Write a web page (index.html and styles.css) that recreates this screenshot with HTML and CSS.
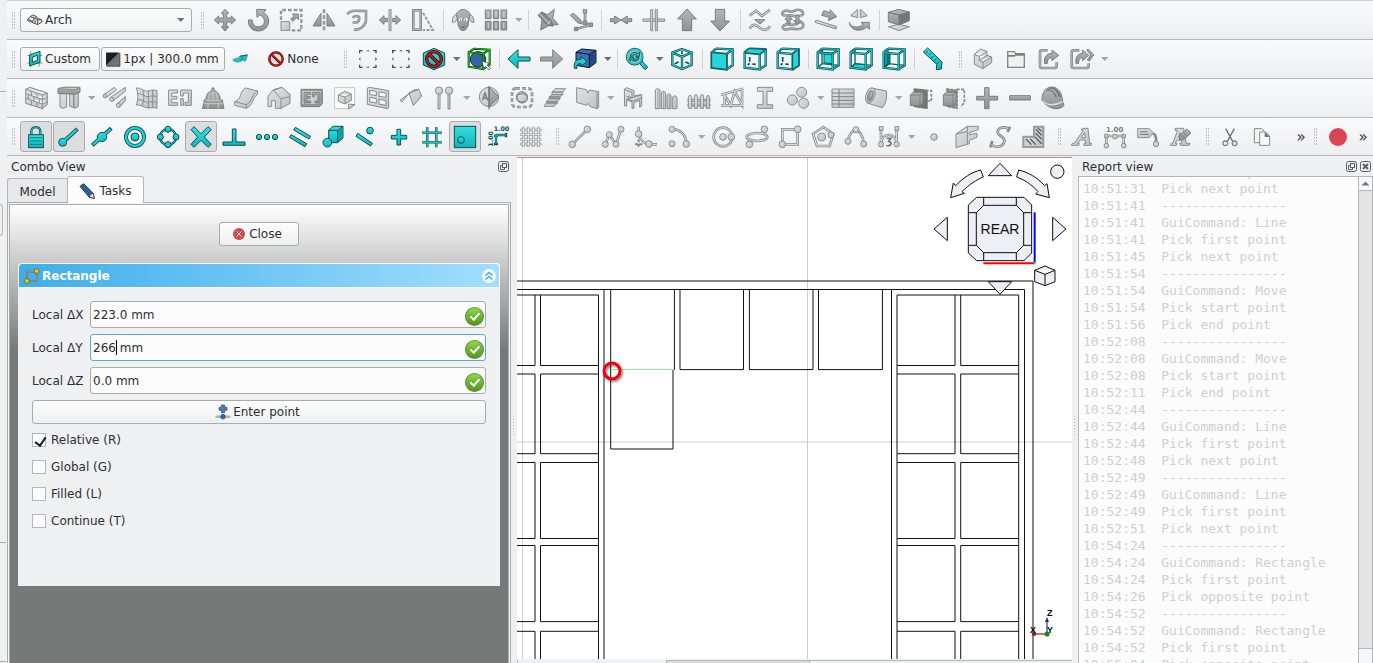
FILE: index.html
```html
<!DOCTYPE html>
<html lang="en">
<head>
<meta charset="utf-8">
<title>Arch workbench</title>
<link rel="stylesheet" href="styles.css">
</head>
<body>
<svg class="defs" aria-hidden="true">
  <defs>
    <linearGradient id="gl" x1="0" y1="0" x2="1" y2="1"><stop offset="0" stop-color="#e2e3e4"/><stop offset="1" stop-color="#bfc1c1"/></linearGradient>
    <linearGradient id="gd" x1="0" y1="0" x2="0" y2="1"><stop offset="0" stop-color="#b6b8b8"/><stop offset="1" stop-color="#909292"/></linearGradient>
    <linearGradient id="tl" x1="0" y1="0" x2="0" y2="1"><stop offset="0" stop-color="#34e0e2"/><stop offset="1" stop-color="#13b4b8"/></linearGradient>
    <linearGradient id="ok" x1="0" y1="0" x2="0" y2="1"><stop offset="0" stop-color="#8be03a"/><stop offset="1" stop-color="#4e9a06"/></linearGradient>
    <symbol id="cube" viewBox="0 0 72 72">
      <path class="to" d="M5 17L50 21V67L5 62ZM18 5L68 7V55L50 67M5 17L18 5M50 21L68 7"/>
      <path class="ti" d="M5 17L50 21V67L5 62ZM18 5L68 7V55L50 67M5 17L18 5M50 21L68 7"/>
    </symbol>
    <symbol id="cubeback" viewBox="0 0 72 72">
      <path class="thin" d="M18 5V50L5 62M18 50L68 55"/>
    </symbol>
    <symbol id="cubehint" viewBox="0 0 72 72"><path class="tn" d="M20 30V44M14 54L20 49M28 51L38 52"/></symbol>
    <symbol id="drop" viewBox="0 0 11 8"><path d="M2 2H9.500L5.750 6Z"/></symbol>
    <symbol id="tick" viewBox="0 0 18 18"><circle cx="9" cy="9" r="8.500" fill="url(#ok)" stroke="#6a7f6a"/><path d="M3.500 9.500L6 7.500 8 10 13 4.500 15 6.500 8.500 14Z" fill="#eee" stroke="#4d7a28" stroke-width=".6"/></symbol>
    <symbol id="float" viewBox="0 0 11 11"><rect x=".5" y=".5" width="10" height="10" rx="2"/><rect x="4.500" y="2.500" width="4" height="4"/><path d="M4 4.500H2.500V8.500H6.500V7"/></symbol>
  </defs>
</svg>

<div class="window">
  <aside class="edge"><i class="rule"></i><i class="tabend"></i><i class="rule"></i><i class="rule"></i></aside>
  <div class="content">
    <header class="toolbars">

      <div class="row first">
        <i class="handle"></i>
        <div class="bench">
          <select aria-label="Workbench"><option>Arch</option></select>
          <svg class="benchicon" viewBox="80 37 48 48"><path d="M82 59L96 46 108 50 112 57 124 60 125 67 112 75 82 63ZM82 59L96 64 108 50M96 64V69M98 54L112 60 124 60M112 60V75M90 51L103 56M104 62L104 71"/></svg>
          <svg class="drop dark" viewBox="0 0 11 8"><use href="#drop"/></svg>
        </div>
        <div class="group">
          <i class="handle"></i>
          <button aria-label="Move"><svg class="i" viewBox="639 24 72 72"><path class="d" d="M675 28L686 40H680V54H694V48L707 60 694 72V66H680V80H686L675 93 664 80H670V66H656V72L643 60 656 48V54H670V40H664Z"/></svg></button>
          <button aria-label="Rotate"><svg class="i" viewBox="738 24 72 72"><path class="d" d="M745 60C745 83 757 93 775 93 793 93 806 80 806 63 806 50 800 43 791 38L798 29 770 28 771 52 779 45C788 48 793 54 793 63 793 74 786 80 775 80 763 80 757 73 757 60Z"/></svg></button>
          <button aria-label="Scale"><svg class="i" viewBox="837 24 72 72"><path d="M843 60V30H904V91H874" fill="none" stroke="#949696" stroke-width="7" stroke-dasharray="11 6"/><rect class="l" x="843" y="65" width="26" height="26" stroke-width="5"/><path class="d" d="M872 57L883 48 877 42H895V59L889 53 879 64Z"/></svg></button>
          <button aria-label="Mirror"><svg class="i" viewBox="936 24 72 72"><path class="d" d="M939 78L963 40V78ZM1005 78L981 40V78Z"/><path class="ls" d="M972 28V92" stroke-width="8" stroke-dasharray="12 5"/></svg></button>
          <button aria-label="Offset"><svg class="i" viewBox="15 24 72 72"><path class="o1" d="M22 43C32 28 48 33 78 33V56C78 78 58 92 42 88"/><path class="o2" d="M22 43C32 28 48 33 78 33V56C78 78 58 92 42 88"/><path class="o1" d="M38 54C44 44 59 48 58 56 57 67 48 70 38 66"/><path class="o2" d="M38 54C44 44 59 48 58 56 57 67 48 70 38 66"/></svg></button>
          <button aria-label="Trim"><svg class="i" viewBox="114 24 72 72"><rect class="l" x="147" y="29" width="6" height="63"/><path class="d" d="M118 60L132 47V55H142V65H132V73ZM182 60L168 47V55H158V65H168V73Z"/></svg></button>
          <button aria-label="Stretch"><svg class="i" viewBox="213 24 72 72"><rect x="220" y="31" width="22" height="58" fill="none" stroke="#858787" stroke-width="8"/><rect x="220" y="31" width="22" height="58" fill="none" stroke="#c4c6c6" stroke-width="2"/><path d="M249 38L279 90H249" fill="none" stroke="#9b9d9d" stroke-width="6" stroke-dasharray="10 4"/></svg></button>
          <i class="sep"></i>
          <button aria-label="Clone"><svg class="i" viewBox="333 24 72 72"><path class="l" d="M352 42C340 44 336 56 337 67 345 68 351 62 353 52ZM386 42C398 44 402 56 402 67 394 68 388 62 386 52Z"/><path class="d" d="M352 54C346 46 350 35 358 33 362 27 376 27 381 33 389 35 393 46 387 54L384 78 377 89 369 92 361 89 355 78Z"/><circle cx="361" cy="59" r="5" fill="#fff"/><circle cx="378" cy="59" r="5" fill="#fff"/><circle cx="362" cy="60" r="2" fill="#555"/><circle cx="377" cy="60" r="2" fill="#555"/><path d="M363 80L369 83 375 80" fill="none" stroke="#666" stroke-width="3"/></svg></button>
          <button aria-label="Array"><svg class="i" viewBox="432 24 72 72"><path class="d" d="M436 30H453V56H436ZM460 30H476V56H460ZM483 30H500V56H483ZM436 64H453V90H436ZM460 64H476V90H460ZM483 64H500V90H483Z"/><path d="M445 34V52M468 34V52M491 34V52M445 68V86M468 68V86M491 68V86" stroke="#c5c7c7" stroke-width="4"/></svg></button>
          <svg class="drop" viewBox="0 0 11 8"><use href="#drop"/></svg>
          <i class="sep"></i>
          <button aria-label="Edit"><svg class="i" viewBox="588 24 72 72"><path class="d" d="M604 36L622 44 643 28 638 54 655 74 628 76 602 90 606 60Z"/><path d="M594 46L606 36 634 62 638 79 621 74Z" fill="#8b8d8d" stroke="#6a6c6c" stroke-width="3"/><path d="M600 42L627 70M622 73L633 63" stroke="#d4d6d6" stroke-width="3"/></svg></button>
          <button aria-label="Edit parts"><svg class="i" viewBox="687 24 72 72"><path class="o1" d="M735 35V68L751 75 708 87"/><path class="o2" d="M735 35V68L751 75 708 87"/><path class="d" d="M730 29H740V39H730ZM748 69H758V80H748ZM703 82H713V92H703ZM729 63H740V73H729ZM691 45L701 40 722 60 725 72 713 68Z"/></svg></button>
          <i class="sep"></i>
          <button aria-label="Join"><svg class="i" viewBox="807 24 72 72"><path class="d" d="M811 56H824V48L843 60 824 72V65H811ZM875 56H862V48L843 60 862 72V65H875Z"/></svg></button>
          <button aria-label="Split"><svg class="i" viewBox="906 24 72 72"><path class="l" d="M909 57H974V64H909Z"/><path class="l" d="M932 29H938V92H932ZM946 29H952V92H946Z"/></svg></button>
          <button aria-label="Upgrade"><svg class="i" viewBox="-15 24 72 72"><path class="d" d="M21 27L49 57H35V92H7V57H-7Z"/></svg></button>
          <button aria-label="Downgrade"><svg class="i" viewBox="84 24 72 72"><path class="d" d="M120 93L149 63H134V28H106V63H92Z"/></svg></button>
          <i class="sep"></i>
          <button aria-label="Wire to B-spline"><svg class="i" viewBox="204 24 72 72"><path class="o1" d="M209 47L228 32 246 48 270 29M209 86C220 68 229 74 240 84 252 94 263 90 270 79"/><path class="o3" d="M209 47L228 32 246 48 270 29M209 86C220 68 229 74 240 84 252 94 263 90 270 79"/><path class="d" d="M224 59H255L240 72Z"/></svg></button>
          <button aria-label="Draft to sketch"><svg class="i" viewBox="303 24 72 72"><path class="o1" d="M312 34C326 26 331 42 344 32 356 25 374 34 368 44 358 54 326 44 312 46 304 44 306 36 312 34ZM312 76C326 66 340 84 356 68 368 62 374 76 366 84 352 94 336 80 322 88 310 92 304 82 312 76"/><path class="o2" d="M312 34C326 26 331 42 344 32 356 25 374 34 368 44 358 54 326 44 312 46 304 44 306 36 312 34ZM312 76C326 66 340 84 356 68 368 62 374 76 366 84 352 94 336 80 322 88 310 92 304 82 312 76"/><path class="d" d="M326 46L337 58H330V72H321V58H315ZM352 74L341 62H348V46H357V62H363Z"/></svg></button>
          <button aria-label="Slope"><svg class="i" viewBox="402 24 72 72"><path class="l" d="M408 60L470 80 468 87 405 67Z"/><path class="d" d="M431 32L450 38 451 29 470 50 445 62 448 52 425 46Z"/></svg></button>
          <button aria-label="Flip dimension"><svg class="i" viewBox="501 24 72 72"><path class="l" d="M533 28V53L512 47ZM541 28V53L562 47Z"/><path class="d" d="M508 68C514 83 536 86 550 73L543 67H568V88L560 81C542 98 511 92 508 68Z"/></svg></button>
          <i class="sep"></i>
          <button aria-label="Working plane side"><svg class="i" viewBox="621 24 72 72"><path class="l" d="M625 80L656 73 688 80 657 92Z"/><path class="d" d="M625 37L655 28 688 36V62L657 75 625 65Z"/><path d="M625 37L657 45 688 36M657 45V75" fill="none" stroke="#6e7070" stroke-width="3"/><path d="M657 45L688 36V62L657 74Z" fill="#777"/></svg></button>
        </div>
      </div>

      <div class="row">
        <div class="group">
          <i class="handle"></i>
          <button class="boxed plane"><svg viewBox="81 153 48 48"><path d="M82 166H127M82 189H127M92 154V200M117 154V200" stroke="#555" stroke-width="2"/><path class="t" d="M89 165L120 154V187L89 198ZM97 171V187L112 181V166Z" fill-rule="evenodd"/></svg>Custom</button>
          <button class="boxed style"><svg viewBox="318 155 44 44"><path d="M321 159H358L321 196Z" fill="#1b1d1e"/><path d="M359 161V197H323Z" fill="#6f757b" stroke="#31363b" stroke-width="2"/></svg>1px | 300.0 mm</button>
          <button class="brush" aria-label="Apply style"><svg class="i" viewBox="684 141 72 72"><path d="M698 180C706 172 714 178 720 168L743 164 737 184 728 181C716 189 706 188 698 180Z" fill="#1fbfc3" stroke="#3a9a9e" stroke-width="2"/><path d="M719 169L741 165M722 180L730 174" stroke="#08666a" stroke-width="3"/></svg></button>
          <button class="none"><svg viewBox="807 154 48 48"><circle cx="831" cy="178" r="20" fill="#ddd" stroke="#3a0a0a" stroke-width="7"/><path d="M817 164L845 192" stroke="#3a0a0a" stroke-width="7"/><circle cx="831" cy="178" r="20" fill="none" stroke="#cc1a1a" stroke-width="4"/><path d="M817 164L845 192" stroke="#cc1a1a" stroke-width="4"/></svg>None</button>
        </div>
        <div class="group">
          <i class="handle"></i>
          <button aria-label="Box selection"><svg class="i" viewBox="48 141 72 72"><path class="mark" d="M59 160V152H68M99 152H108V160M108 194V202H99M68 202H59V194"/><path class="pt" d="M78 154L84 150 90 154ZM78 200L84 204 90 200ZM61 171L57 177 61 183ZM106 171L111 177 106 183Z"/></svg></button>
          <button aria-label="Box element selection"><svg class="i" viewBox="147 141 72 72"><path class="mark" d="M158 160V152H167M198 152H207V160M207 194V202H198M167 202H158V194"/><path class="pt" d="M177 154L183 150 189 154ZM177 200L183 204 189 200ZM160 171L156 177 160 183ZM205 171L210 177 205 183Z"/></svg></button>
          <button aria-label="Draw style"><svg class="i" viewBox="246 141 72 72"><path class="t" d="M282 145L314 159V195L282 209 250 195V159Z"/><circle cx="282" cy="177" r="22" fill="none" stroke="#2c0505" stroke-width="10"/><path d="M267 162L297 192" stroke="#2c0505" stroke-width="10"/><circle cx="282" cy="177" r="22" fill="none" stroke="#d01818" stroke-width="5"/><path d="M266 161L298 193" stroke="#d01818" stroke-width="5"/></svg></button>
          <svg class="drop dark" viewBox="0 0 11 8"><use href="#drop"/></svg>
          <button aria-label="Bounding box"><svg class="i" viewBox="381 141 72 72"><circle cx="414" cy="178" r="23" fill="#3465a4" stroke="#12294a" stroke-width="3"/><path d="M386 157L430 161V207L386 200ZM386 157L402 146 449 149V194L430 207M430 161L449 149" fill="none" stroke="#063c06" stroke-width="6"/><path d="M386 157L430 161V207L386 200ZM386 157L402 146 449 149V194L430 207M430 161L449 149" fill="none" stroke="#12c412" stroke-width="3"/><path d="M426 183L431 205 437 199 447 210 452 205 441 195 448 191Z" fill="#fff" stroke="#333" stroke-width="2"/></svg></button>
          <i class="sep"></i>
          <button aria-label="Back"><svg class="i" viewBox="501 141 72 72"><path class="t" d="M504 177L534 149V171H570V183H534V205Z"/></svg></button>
          <button aria-label="Forward"><svg class="i" viewBox="600 141 72 72"><path class="d" d="M668 177L638 149V171H602V183H638V205Z"/></svg></button>
          <button aria-label="Linked object"><svg class="i" viewBox="699 141 72 72"><path d="M708 157L725 147 768 151V188L748 203 708 196Z" fill="#3f70b0" stroke="#0b1521" stroke-width="3"/><path d="M750 164L767 153V187L750 200Z" fill="#204a87"/><path d="M708 157L748 163 768 151M748 163V203" fill="none" stroke="#0b1521" stroke-width="3"/><path class="t" d="M703 205C700 186 710 177 723 178V170L741 184 723 199V191C714 190 709 194 711 205Z"/></svg></button>
          <svg class="drop dark" viewBox="0 0 11 8"><use href="#drop"/></svg>
          <i class="sep"></i>
          <button aria-label="Fit all"><svg class="i" viewBox="855 141 72 72"><path class="t" d="M896 187L903 180 923 202 915 209Z"/><circle cx="884" cy="170" r="22" fill="#fff" stroke="#0b5054" stroke-width="9"/><circle cx="884" cy="170" r="22" fill="#9fb9bc" stroke="#16cfd1" stroke-width="5"/><path class="t" d="M871 168C873 157 887 154 894 161L898 157V169H887L890 165C885 161 879 163 878 168ZM897 173C895 184 881 186 874 179L870 183V171H881L878 175C884 179 889 178 890 173Z" stroke-width="2"/></svg></button>
          <svg class="drop dark" viewBox="0 0 11 8"><use href="#drop"/></svg>
          <button aria-label="Isometric"><svg class="i" viewBox="0 0 72 72"><path class="to" d="M36 6L65 17V54L36 66 7 54V17ZM7 17L36 29 65 17M36 29V66"/><path class="ti" d="M36 6L65 17V54L36 66 7 54V17ZM7 17L36 29 65 17M36 29V66"/><path class="tn" d="M36 12V22M14 50L26 45M58 50L46 45"/></svg></button>
          <i class="sep"></i>
          <button aria-label="Front"><svg class="i" viewBox="0 0 72 72"><use href="#cube"/><path class="face" d="M5 17L50 21V67L5 62Z"/></svg></button>
          <button aria-label="Top"><svg class="i" viewBox="0 0 72 72"><use href="#cubehint"/><use href="#cube"/><path class="face" d="M5 17L18 5 68 7 50 21Z"/></svg></button>
          <button aria-label="Right"><svg class="i" viewBox="0 0 72 72"><use href="#cubehint"/><use href="#cube"/><path class="face" d="M50 21L68 7V55L50 67Z"/></svg></button>
          <i class="sep"></i>
          <button aria-label="Rear"><svg class="i" viewBox="0 0 72 72"><path class="face" d="M24 20L50 22V50L24 48Z"/><path class="face" d="M20 8L66 9 52 18 20 16Z" fill-opacity="0"/><use href="#cubeback"/><use href="#cube"/></svg></button>
          <button aria-label="Bottom"><svg class="i" viewBox="0 0 72 72"><path class="face" d="M5 62L18 50 50 53V67Z"/><use href="#cubeback"/><use href="#cube"/></svg></button>
          <button aria-label="Left"><svg class="i" viewBox="0 0 72 72"><path class="face deep" d="M7 18H24V50L7 62Z"/><use href="#cubeback"/><use href="#cube"/></svg></button>
          <i class="sep"></i>
          <button aria-label="Measure"><svg class="i" viewBox="726 141 72 72"><path class="t" d="M730 156L743 144 786 186 784 207 769 209 770 193Z"/><path d="M744 153L737 160M753 160L747 165M760 169L751 176M769 177L763 182M778 184L770 192" stroke="#0b5054" stroke-width="3"/></svg></button>
        </div>
        <div class="group">
          <i class="handle"></i>
          <button aria-label="Part"><svg class="i" viewBox="873 141 72 72"><path class="l" d="M883 163L902 147 921 154V166L935 171V188L909 206 883 193ZM883 163L898 169 921 154M898 169V181L921 166M898 181L909 186 935 171M909 186V206"/></svg></button>
          <button aria-label="Group"><svg class="i" viewBox="972 141 72 72"><path d="M983 202V155H1003L1007 161H1033V202Z" fill="#f0f1f1" stroke="#858787" stroke-width="4"/><path d="M983 165H1004L1008 160H1033V167H1008L1004 170H983Z" fill="#7c7e7e"/></svg></button>
          <button aria-label="Make link"><svg class="i" viewBox="42 141 72 72"><path class="o1" d="M74 151H57Q51 151 51 157V198Q51 204 57 204H94Q101 204 101 197V186"/><path class="o2" d="M74 151H57Q51 151 51 157V198Q51 204 57 204H94Q101 204 101 197V186"/><path class="d" d="M65 191C62 170 71 161 87 160V150L107 166 87 182V173C78 173 73 178 73 190Z"/></svg></button>
          <button aria-label="Link actions"><svg class="i" viewBox="141 141 72 72"><path class="o1" d="M169 151H152Q146 151 146 157V198Q146 204 152 204H190Q197 204 197 197V190"/><path class="o2" d="M169 151H152Q146 151 146 157V198Q146 204 152 204H190Q197 204 197 197V190"/><path class="d" d="M159 191C156 170 165 161 179 160V150L197 166 179 182V173C171 173 167 178 167 190Z"/><path class="d" d="M191 150L197 148 212 165 199 183 193 180 203 165Z"/></svg></button>
          <svg class="drop" viewBox="0 0 11 8"><use href="#drop"/></svg>
        </div>
      </div>

      <div class="row">
        <div class="group">
          <i class="handle"></i>
          <button aria-label="Wall"><svg class="i" viewBox="72 258 72 72"><path class="l" d="M77 268L90 262 142 279V314L127 326 77 310ZM77 268L127 284 142 279M127 284V326M77 281L127 298 142 292M77 295L127 312 142 304M94 273V287M111 279V293M85 284V297M102 290V304M118 295V308M94 301V315M111 306V320"/></svg></button>
          <button aria-label="Structure"><svg class="i" viewBox="171 258 72 72"><path class="l" d="M180 281H200V321L188 325 180 321ZM209 280H221V323L209 319ZM221 280H235V320L223 325Z"/><path class="d" d="M174 266L192 262H240V277L225 283 174 280Z"/><path class="l" d="M174 266L192 262H240L226 269Z"/></svg></button>
          <svg class="drop" viewBox="0 0 11 8"><use href="#drop"/></svg>
          <button aria-label="Rebar"><svg class="i" viewBox="306 258 72 72"><path class="l" d="M310 285L343 262 350 269 318 293Q310 292 310 285ZM330 293L376 262V274L339 303Q330 302 330 293ZM350 312L376 289V302L359 321Q350 321 350 312Z"/><circle class="l" cx="314" cy="288" r="5"/><circle class="l" cx="335" cy="298" r="6"/><circle class="l" cx="355" cy="316" r="6"/></svg></button>
          <button aria-label="Curtain wall"><svg class="i" viewBox="405 258 72 72"><path class="l" d="M409 264C422 262 431 276 445 273 455 270 462 268 471 272V325C460 321 452 324 444 324 430 322 422 313 409 315 415 300 415 280 409 264ZM414 281C424 279 434 290 445 290 455 287 462 287 471 290M413 299C424 297 434 307 445 307 455 304 462 304 471 308M428 269C433 285 433 300 427 316M445 273V324M458 270V323"/></svg></button>
          <button aria-label="Building part"><svg class="i" viewBox="504 258 72 72"><path class="l" d="M506 270H533V279H515V289H531V297H515V308H533V316H506ZM542 270H574V316H555V307H565V279H551V288H542ZM542 296H550V316H542Z"/></svg></button>
          <button aria-label="Project"><svg class="i" viewBox="603 258 72 72"><path class="d" d="M612 308V300H618C616 287 625 275 636 271V264H642V271C653 275 662 287 660 300H668V308L672 325H607Z"/><path d="M616 301H663M613 311H668M639 276V298M629 280L625 298M649 280L653 298M624 313V325M655 313V325" stroke="#e0e2e2" stroke-width="2"/></svg></button>
          <button aria-label="Site"><svg class="i" viewBox="702 258 72 72"><path class="l" d="M704 305C726 299 718 274 737 264L773 273V283C757 292 760 317 739 325L704 316Z"/><path d="M704 305L739 314C758 306 754 282 773 273M739 314V325" fill="none" stroke="#8a8c8c" stroke-width="3"/></svg></button>
          <button aria-label="Building"><svg class="i" viewBox="801 258 72 72"><path class="l" d="M804 289L820 269 846 262 870 284V310L843 325H826V302H815V320H804Z"/><path class="l" d="M846 262L870 284V290L843 296 821 271ZM843 296V325"/></svg></button>
          <button aria-label="Level"><svg class="i" viewBox="900 258 72 72"><path class="d" d="M903 268H967V312L958 320H903Z"/><path class="l" d="M906 271H964V314H906Z"/><path class="d" d="M912 277H932V283H919V289H930V295H919V303H932V309H912ZM937 277H960V309H945V303H954V283H943V290H937Z" stroke-width="2"/></svg></button>
          <button aria-label="Space"><svg class="i" viewBox="-21 258 72 72"><path d="M-16 263H44V314L33 326H-16Z" fill="#fcfcfc" stroke="#c5c7c7" stroke-width="3"/><path class="l" d="M-5 285L14 274 34 282V301L15 312-5 304ZM-5 285L15 291 34 282M15 291V312"/><path class="l" d="M44 314L26 326V312Z"/></svg></button>
          <button aria-label="Window"><svg class="i" viewBox="78 258 72 72"><path class="l" d="M82 264L88 262 146 272V323L141 326 82 313Z"/><path d="M89 271L109 274V287L89 284ZM117 276L138 279V292L117 289ZM89 292L109 296V309L89 305ZM117 298L138 302V316L117 312Z" fill="#f4f5f6" stroke="#8a8c8c" stroke-width="3"/></svg></button>
          <button aria-label="Roof"><svg class="i" viewBox="177 258 72 72"><path class="l" d="M180 301L222 270 236 268 207 279 186 306ZM207 279L236 268 245 288 220 317Z"/></svg></button>
          <button aria-label="Axis"><svg class="i" viewBox="276 258 72 72"><path class="l" d="M294 283H300V327H294ZM324 283H330V327H324Z"/><circle class="l" cx="297" cy="272" r="11"/><circle class="l" cx="327" cy="272" r="11"/></svg></button>
          <svg class="drop" viewBox="0 0 11 8"><use href="#drop"/></svg>
          <button aria-label="Section plane"><svg class="i" viewBox="411 258 72 72"><circle class="l" cx="447" cy="291" r="29"/><path class="d" d="M447 262L477 291 447 320Z"/><path d="M447 258V328" stroke="#777" stroke-width="4"/><path d="M427 301L435 279 443 301M430 294H440" fill="none" stroke="#777" stroke-width="4"/></svg></button>
          <button aria-label="Space outline"><svg class="i" viewBox="510 258 72 72"><rect x="516" y="265" width="60" height="56" rx="12" fill="none" stroke="#858787" stroke-width="8" stroke-dasharray="12 6"/><rect x="516" y="265" width="60" height="56" rx="12" fill="none" stroke="#d4d6d6" stroke-width="2" stroke-dasharray="12 6"/><circle class="d" cx="546" cy="292" r="17"/><path class="l" d="M532 285L549 281 561 288V302L543 306 532 300Z"/></svg></button>
          <button aria-label="Stairs"><svg class="i" viewBox="609 258 72 72"><path class="l" d="M636 276L645 266H677L668 276ZM636 276H668V284H636ZM628 290L636 284H668L660 292H628ZM620 304L628 295H660L652 305H620ZM628 290H660V297H628ZM612 318L620 308H651L643 319H612ZM620 304H652V311H620Z"/></svg></button>
          <button aria-label="Panel"><svg class="i" viewBox="708 258 72 72"><path class="l" d="M710 263L739 269 744 279 748 270 776 275V322L771 326 749 319 745 310 740 316 710 307Z"/><path d="M771 277V325" stroke="#8a8c8c" stroke-width="3"/></svg></button>
          <svg class="drop" viewBox="0 0 11 8"><use href="#drop"/></svg>
          <button aria-label="Equipment"><svg class="i" viewBox="843 258 72 72"><path class="l" d="M853 268L860 263 882 272V288L905 284V318L899 322V301L882 308V325L876 325V306L860 300V318H854ZM853 268L876 277V293L860 289"/><path class="l" d="M876 293L905 284V294L880 304 860 296Z"/></svg></button>
          <button aria-label="Fence posts"><svg class="i" viewBox="942 258 72 72"><path class="l" d="M946 326V270L953 265 960 270V326ZM964 326V278L970 273 977 278V326ZM981 326V286L987 281 993 286V326ZM997 326V292L1004 287 1011 292V326Z"/><path d="M954 268V325M971 276V325M988 284V325" stroke="#8a8c8c" stroke-width="2"/></svg></button>
          <button aria-label="Fence"><svg class="i" viewBox="21 258 72 72"><path class="l" d="M24 298H90V304H24ZM24 312H90V318H24Z"/><path class="l" d="M25 325V293Q30 278 35 293V325ZM43 325V290Q48 276 53 290V325ZM61 325V290Q66 276 71 290V325ZM79 325V293Q84 278 89 293V325Z"/></svg></button>
          <button aria-label="Truss"><svg class="i" viewBox="120 258 72 72"><path class="o1" d="M123 284L190 266M123 316H190M134 282V315M134 285L152 316 164 275 186 314V268"/><path class="o3" d="M123 284L190 266M123 316H190M134 282V315M134 285L152 316 164 275 186 314V268"/></svg></button>
          <button aria-label="Profile"><svg class="i" viewBox="219 258 72 72"><path class="l" d="M232 262H278V274H261V314H278V325H232V314H249V274H232Z"/></svg></button>
          <button aria-label="Material"><svg class="i" viewBox="318 258 72 72"><circle class="l" cx="365" cy="277" r="15"/><circle class="l" cx="337" cy="300" r="15"/><circle class="l" cx="371" cy="310" r="15"/></svg></button>
          <svg class="drop" viewBox="0 0 11 8"><use href="#drop"/></svg>
          <button aria-label="Schedule"><svg class="i" viewBox="453 258 72 72"><path class="l" d="M456 267H522V322H456Z"/><path d="M456 279H522M456 290H522M456 301H522M456 312H522M477 267V322" stroke="#7f8181" stroke-width="3"/></svg></button>
          <button aria-label="Pipe"><svg class="i" viewBox="552 258 72 72"><path class="l" d="M574 264L619 273C622 290 618 315 606 323L562 309Z"/><ellipse class="l" cx="571" cy="286" rx="13" ry="23" transform="rotate(20 571 286)"/><ellipse class="d" cx="571" cy="287" rx="7" ry="15" transform="rotate(20 571 287)"/></svg></button>
          <svg class="drop" viewBox="0 0 11 8"><use href="#drop"/></svg>
          <button aria-label="Cut plane"><svg class="i" viewBox="687 258 72 72"><path d="M702 266L742 270V326L702 320Z" fill="#777" stroke="#666" stroke-width="2"/><path class="d" d="M691 285L700 277H729V308L720 317H691ZM691 285H720V317M720 285L729 277"/><path d="M737 272H754V303H740" fill="none" stroke="#858787" stroke-width="5" stroke-dasharray="9 4"/></svg></button>
          <button aria-label="Cut line"><svg class="i" viewBox="786 258 72 72"><path d="M800 266L832 270V326L800 320Z" fill="#8c8e8e" stroke="#777" stroke-width="3" stroke-dasharray="8 4"/><path class="d" d="M790 285L799 277H828V308L819 317H790ZM790 285H819V317M819 285L828 277"/><path d="M830 268H853V308L842 320" fill="none" stroke="#858787" stroke-width="5" stroke-dasharray="9 4"/></svg></button>
          <button aria-label="Add component"><svg class="i" viewBox="885 258 72 72"><path class="d" d="M914 263H927V289H953V300H927V326H914V300H890V289H914Z"/></svg></button>
          <button aria-label="Remove component"><svg class="i" viewBox="984 258 72 72"><path class="d" d="M989 287H1051V300H989Z"/></svg></button>
          <button aria-label="Survey"><svg class="i" viewBox="54 258 72 72"><path class="d" d="M57 302C56 277 69 260 89 261 108 263 117 281 119 304L123 317C110 330 87 329 70 315Z"/><path d="M76 265C90 262 104 271 109 290M84 262C97 265 110 276 113 292M70 271C83 267 95 278 100 292" fill="none" stroke="#777" stroke-width="4"/><path d="M58 302C76 320 98 316 119 305" fill="none" stroke="#dadcdc" stroke-width="4"/></svg></button>
        </div>
      </div>

      <div class="row last">
        <div class="group">
          <i class="handle"></i>
          <button class="on" aria-label="Snap lock"><svg class="i" viewBox="72 375 72 72"><path class="to" d="M94 405V394C94 377 121 377 121 394V405"/><path class="ti" d="M94 405V394C94 377 121 377 121 394V405"/><rect class="t" x="86" y="404" width="44" height="39"/><path d="M90 413H126M90 423H126M90 433H126" stroke="#0b8084" stroke-width="3"/></svg></button>
          <button class="on" aria-label="Snap endpoint"><svg class="i" viewBox="171 375 72 72"><path class="to b" d="M189 427L232 387"/><circle class="t" cx="188" cy="427" r="12"/><path class="ti b" d="M192 423L230 389"/></svg></button>
          <button aria-label="Snap midpoint"><svg class="i" viewBox="270 375 72 72"><path class="to b" d="M277 436L334 385"/><circle class="t" cx="306" cy="411" r="14"/><path class="ti b" d="M279 434L332 387"/></svg></button>
          <button aria-label="Snap center"><svg class="i" viewBox="369 375 72 72"><circle class="to b" cx="405" cy="411" r="27"/><circle class="ti b" cx="405" cy="411" r="27"/><circle class="t" cx="405" cy="411" r="12"/></svg></button>
          <button aria-label="Snap angle"><svg class="i" viewBox="468 375 72 72"><circle class="to" cx="504" cy="411" r="24"/><circle class="ti" cx="504" cy="411" r="24"/><circle class="t" cx="504" cy="388" r="9"/><circle class="t" cx="481" cy="411" r="9"/><circle class="t" cx="528" cy="411" r="9"/><circle class="t" cx="504" cy="434" r="9"/></svg></button>
          <button class="on" aria-label="Snap intersection"><svg class="i" viewBox="567 375 72 72"><path class="t" d="M573 389L582 380 603 401 624 380 634 389 613 411 634 433 624 442 603 421 582 442 573 433 593 411Z"/></svg></button>
          <button aria-label="Snap perpendicular"><svg class="i" viewBox="666 375 72 72"><path class="t" d="M697 387H708V426H735V436H669V426H697Z"/></svg></button>
          <button aria-label="Snap extension"><svg class="i" viewBox="765 375 72 72"><circle class="t" cx="777" cy="411" r="8"/><circle class="t" cx="801" cy="411" r="8"/><circle class="t" cx="825" cy="411" r="8"/></svg></button>
          <button aria-label="Snap parallel"><svg class="i" viewBox="864 375 72 72"><path class="t" d="M886 382L932 409 927 417 881 390ZM873 404L920 431 915 440 868 412Z"/></svg></button>
          <button aria-label="Snap special"><svg class="i" viewBox="963 375 72 72"><path class="t" d="M986 391L999 379H1029V414L1013 428H986ZM986 391H1013V428M1013 391L1029 379"/><path d="M1015 392L1028 382V413L1015 425Z" fill="#0e9da1"/><circle class="t" cx="982" cy="428" r="13"/></svg></button>
          <button aria-label="Snap near"><svg class="i" viewBox="42 375 72 72"><path class="t" d="M53 400L97 430 92 438 48 409Z"/><circle class="t" cx="90" cy="392" r="10"/></svg></button>
          <button aria-label="Snap ortho"><svg class="i" viewBox="141 375 72 72"><path class="t" d="M171 388H182V406H200V417H182V435H171V417H154V406H171Z"/></svg></button>
          <button aria-label="Snap grid"><svg class="i" viewBox="240 375 72 72"><path class="to" d="M262 381V442M289 381V442M246 398H306M246 427H306"/><path class="ti" d="M262 381V442M289 381V442M246 398H306M246 427H306"/></svg></button>
          <button class="on" aria-label="Snap working plane"><svg class="i" viewBox="339 375 72 72"><rect class="t" x="343" y="379" width="64" height="64"/><circle class="t" cx="363" cy="420" r="10"/></svg></button>
          <button aria-label="Snap dimensions"><svg class="i" viewBox="438 375 72 72"><text class="tiny" x="461" y="393">1.00</text><text class="tiny" transform="translate(458 440) rotate(-90)">1.00</text><path class="to" d="M468 405H498M468 405V432M462 407H474M462 432H474M498 399V412"/><path class="ti" d="M468 405H498M468 405V432"/></svg></button>
          <button aria-label="Toggle grid"><svg class="i" viewBox="537 375 72 72"><path d="M550 380V441M565 380V441M580 380V441M595 380V441M541 390H604M541 404H604M541 418H604M541 432H604" stroke="#7e8080" stroke-width="7"/><path d="M550 381V440M565 381V440M580 381V440M595 381V440M542 390H603M542 404H603M542 418H603M542 432H603" stroke="#f4f4f4" stroke-width="3"/></svg></button>
        </div>
        <div class="group">
          <i class="handle"></i>
          <button aria-label="Line"><svg class="i" viewBox="684 375 72 72"><path class="o1" d="M697 433L742 388"/><path class="o3" d="M697 433L742 388"/><circle class="l" cx="697" cy="433" r="10"/><circle class="l" cx="742" cy="388" r="10"/></svg></button>
          <button aria-label="Polyline"><svg class="i" viewBox="783 375 72 72"><path class="o1" d="M796 433L808 404 828 433 843 388"/><path class="o3" d="M796 433L808 404 828 433 843 388"/><circle class="l" cx="796" cy="433" r="9"/><circle class="l" cx="808" cy="404" r="9"/><circle class="l" cx="828" cy="433" r="9"/><circle class="l" cx="843" cy="388" r="9"/></svg></button>
          <button aria-label="Fillet"><svg class="i" viewBox="882 375 72 72"><path class="o1" d="M896 380V402Q904 430 927 433H951"/><path class="o3" d="M896 380V402Q904 430 927 433H951"/><path d="M896 418V442M885 433H910" stroke="#858787" stroke-width="6" stroke-dasharray="9 4"/><circle class="l" cx="896" cy="402" r="10"/><circle class="l" cx="927" cy="432" r="10"/></svg></button>
          <button aria-label="Arc"><svg class="i" viewBox="981 375 72 72"><path class="o1" d="M996 388C1022 387 1038 405 1039 431"/><path class="o3" d="M996 388C1022 387 1038 405 1039 431"/><circle class="l" cx="996" cy="388" r="9"/><circle class="l" cx="996" cy="431" r="9"/><circle class="l" cx="1039" cy="432" r="10"/></svg></button>
          <svg class="drop" viewBox="0 0 11 8"><use href="#drop"/></svg>
          <button aria-label="Circle"><svg class="i" viewBox="96 375 72 72"><circle class="o1" cx="129" cy="411" r="28"/><circle class="o3" cx="129" cy="411" r="28"/><circle class="l" cx="129" cy="411" r="10"/><circle class="l" cx="154" cy="411" r="10"/></svg></button>
          <button aria-label="Ellipse"><svg class="i" viewBox="195 375 72 72"><ellipse class="o1" cx="231" cy="411" rx="31" ry="12"/><ellipse class="o3" cx="231" cy="411" rx="31" ry="12"/><circle class="l" cx="253" cy="388" r="10"/><circle class="l" cx="208" cy="433" r="10"/></svg></button>
          <button aria-label="Rectangle tool"><svg class="i" viewBox="294 375 72 72"><path class="o1" d="M307 388H353V433H307Z"/><path class="o3" d="M307 388H353V433H307Z"/><circle class="l" cx="353" cy="388" r="10"/><circle class="l" cx="307" cy="433" r="10"/></svg></button>
          <button aria-label="Polygon"><svg class="i" viewBox="393 375 72 72"><path class="o1" d="M430 381L460 402 449 438H411L399 402Z"/><path class="o3" d="M430 381L460 402 449 438H411L399 402Z"/><circle class="l" cx="425" cy="411" r="12"/><circle class="l" cx="453" cy="405" r="9"/></svg></button>
          <button aria-label="B-spline"><svg class="i" viewBox="492 375 72 72"><path class="o1" d="M504 425C508 380 547 380 551 431"/><path class="o3" d="M504 425C508 380 547 380 551 431"/><circle class="l" cx="504" cy="424" r="9"/><circle class="l" cx="528" cy="389" r="9"/><circle class="l" cx="551" cy="432" r="9"/></svg></button>
          <button aria-label="Bezier"><svg class="i" viewBox="591 375 72 72"><path class="o1" d="M603 385V432M650 385V432M603 430C606 396 647 396 650 430"/><path class="o3" d="M603 385V432M650 385V432M603 430C606 396 647 396 650 430"/><rect class="l" x="598" y="380" width="11" height="11"/><rect class="l" x="645" y="380" width="11" height="11"/><circle class="l" cx="603" cy="433" r="8"/><circle class="l" cx="650" cy="433" r="8"/><path d="M620 415H633L626 424Q634 426 633 432T619 437" fill="none" stroke="#777" stroke-width="5"/></svg></button>
          <svg class="drop" viewBox="0 0 11 8"><use href="#drop"/></svg>
          <button aria-label="Point"><svg class="i" viewBox="726 375 72 72"><circle class="l" cx="762" cy="411" r="10"/></svg></button>
          <button aria-label="Facebinder"><svg class="i" viewBox="825 375 72 72"><path class="l" d="M828 402L862 379H895V389L868 398V404L891 400V412L868 421V431L828 443Z"/><path d="M828 402L862 395V379M862 395V432" fill="none" stroke="#8a8c8c" stroke-width="3"/></svg></button>
          <button aria-label="Shape from text"><svg class="i" viewBox="924 375 72 72"><path d="M985 386C965 376 947 389 955 401 962 411 977 412 973 426 968 441 947 444 934 435M990 380L983 396M937 423L931 442" fill="none" stroke="#858787" stroke-width="8"/><path d="M985 386C965 376 947 389 955 401 962 411 977 412 973 426 968 441 947 444 934 435" fill="none" stroke="#d4d6d6" stroke-width="3"/></svg></button>
          <button aria-label="Hatch"><svg class="i" viewBox="-6 375 72 72"><path class="l" d="M33 380H61V441H1V410H33Z"/><path d="M38 388L56 406M38 400L56 418M33 408L56 431M22 417L38 434M9 417L25 434M44 384L56 394" stroke="#5c5e5e" stroke-width="4"/><path d="M33 380H61V441H1V410H33Z" fill="none" stroke="#9a9c9c" stroke-width="6"/></svg></button>
        </div>
        <div class="group">
          <i class="handle"></i>
          <button aria-label="Text"><svg class="i" viewBox="141 375 72 72"><path class="l" d="M145 436L148 430H154L181 391 175 390 178 385H195L200 430H206L204 436H182L184 430H189L187 420H171L164 430H169L167 436ZM175 413H187L185 398Z" fill-rule="evenodd"/></svg></button>
          <button aria-label="Dimension"><svg class="i" viewBox="240 375 72 72"><path class="o1" d="M250 436V408H302V436"/><path class="o3" d="M250 436V408H302V436"/><circle class="l" cx="250" cy="437" r="7"/><circle class="l" cx="302" cy="437" r="7"/><circle class="l" cx="276" cy="410" r="7"/><path class="l" d="M245 403H255V413H245ZM297 403H307V413H297Z"/><text class="tiny grey" x="249" y="396">1.00</text></svg></button>
          <button aria-label="Label"><svg class="i" viewBox="339 375 72 72"><path class="l" d="M344 386H378L392 399 378 413H344Z"/><path d="M350 395H373M350 403H378" stroke="#858787" stroke-width="4"/><path class="o1" d="M391 400Q401 405 399 428"/><circle class="l" cx="399" cy="432" r="8"/></svg></button>
          <button aria-label="Annotation styles"><svg class="i" viewBox="438 375 72 72"><path class="l" d="M442 436L445 430H449L464 391H456V385H482L484 401 490 430H501L499 436H472L470 430H476L474 420H462L457 430H462L460 436ZM466 412H473L471 398Z" fill-rule="evenodd"/><path class="d" d="M469 408L491 387 504 399 482 419 470 420ZM475 405L486 416M482 398L494 409" stroke-width="2"/></svg></button>
        </div>
        <div class="group">
          <i class="handle"></i>
          <button aria-label="Cut"><svg class="i" viewBox="585 375 72 72"><path d="M608 386L629 424M634 386L613 424" stroke="#6e7070" stroke-width="4"/><circle cx="607" cy="430" r="7" fill="none" stroke="#858787" stroke-width="4"/><circle cx="635" cy="430" r="7" fill="none" stroke="#858787" stroke-width="4"/></svg></button>
          <button aria-label="Copy"><svg class="i" viewBox="684 375 72 72"><path d="M709 428H694V386H716L724 394" fill="#f5f5f5" stroke="#858787" stroke-width="3"/><path d="M710 396H728L740 408V436H710Z" fill="#f8f8f8" stroke="#858787" stroke-width="3"/><path d="M725 395L741 411H725Z" fill="#777"/></svg></button>
        </div>
        <div class="tail">
          <button class="more">»</button>
          <i class="handle"></i>
          <button aria-label="Record macro"><svg class="i" viewBox="0 0 24 24"><circle cx="12" cy="12" r="9" fill="#da4453"/></svg></button>
          <button class="more">»</button>
        </div>
      </div>
    </header>

    <main class="panes">
      <section class="combo">
        <div class="title"><span>Combo View</span><button aria-label="Float panel"><svg class="dockicon" viewBox="0 0 11 11"><use href="#float"/></svg></button></div>
        <div class="tabs">
          <button class="tab">Model</button>
          <button class="tab current"><svg viewBox="0 0 48 48"><path d="M3 10L14 2 42 31 46 46 31 43Z" fill="#3465a4" stroke="#1d3858" stroke-width="3"/><path d="M9 7L36 37" stroke="#204a87" stroke-width="3"/><path d="M31 43L34 34 43 31 46 46Z" fill="#e0e0d0" stroke="#222" stroke-width="2"/></svg>Tasks</button>
        </div>
        <div class="frame"><div class="tasks">
          <button class="push close"><svg viewBox="0 0 12 12"><circle cx="6" cy="6" r="6" fill="#da4453"/><path d="M3.500 3.500L8.500 8.500M8.500 3.500L3.500 8.500" stroke="#fff"/></svg>Close</button>
          <form class="card">
            <h2><svg class="recticon" viewBox="0 0 48 48"><path d="M9 11H38V39H9Z" fill="none" stroke="#666" stroke-width="5"/><path d="M9 11H38V39H9Z" fill="none" stroke="#d3a090" stroke-width="2"/><circle cx="38" cy="9" r="7" fill="#edd400" stroke="#5a5200" stroke-width="2"/><circle cx="9" cy="39" r="7" fill="#edd400" stroke="#5a5200" stroke-width="2"/></svg><span>Rectangle</span><svg class="fold" viewBox="0 0 14 14"><circle cx="7" cy="7" r="7" fill="#f4f6f8"/><path d="M3.500 6.500L7 3.500 10.500 6.500M3.500 10.500L7 7.500 10.500 10.500" fill="none" stroke="#3daee9" stroke-width="1.500"/></svg></h2>
            <div class="fields">
              <div class="field"><label for="dx">Local ΔX</label><div class="entry"><input id="dx" type="text" value="223.0 mm"><svg viewBox="0 0 18 18"><use href="#tick"/></svg></div></div>
              <div class="field"><label for="dy">Local ΔY</label><div class="entry active"><input id="dy" type="text" value="266 mm"><i class="caret"></i><svg viewBox="0 0 18 18"><use href="#tick"/></svg></div></div>
              <div class="field"><label for="dz">Local ΔZ</label><div class="entry"><input id="dz" type="text" value="0.0 mm"><svg viewBox="0 0 18 18"><use href="#tick"/></svg></div></div>
              <button type="button" class="push"><svg class="enter" viewBox="0 0 48 48"><path d="M2 38H46" stroke="#888" stroke-width="6"/><path d="M3 38H45" stroke="#ddd" stroke-width="2"/><path d="M19 3H29V10H36V19H29V26H19V19H12V10H19Z" fill="#4a7ab8" stroke="#35506f" stroke-width="2"/><circle cx="24" cy="38" r="7" fill="#3465a4" stroke="#35506f" stroke-width="2"/></svg>Enter point</button>
            </div>
            <div class="checks">
              <label><input type="checkbox" checked>Relative (R)</label>
              <label><input type="checkbox">Global (G)</label>
              <label><input type="checkbox">Filled (L)</label>
              <label><input type="checkbox">Continue (T)</label>
            </div>
          </form>
        </div></div>
      </section>
      <div class="splitter"></div>
      <section class="viewport">
        <svg class="scene" viewBox="517 158 555 501" preserveAspectRatio="xMaxYMid slice">
          <defs><filter id="soft" x="-50%" y="-50%" width="200%" height="200%"><feDropShadow dx="1.500" dy="1.500" stdDeviation="1" flood-color="#000" flood-opacity=".5"/></filter></defs>
          <path class="grid" d="M522.500 158V659M807.500 158V659M517 442H1072"/>
          <path class="walls" d="M517 281H1033V659M517 289.500H1024.500V659M604 289.500V659M891.500 289.500V659
            M517 295H598.500V659M535 295V365.500H517M540.500 295V365.500H598.500
            M517 374H535V453.700H517M598.500 374H540.500V453.700H598.500
            M517 462.500H535V538.500H517M598.500 462.500H540.500V538.500H598.500
            M517 545.500H535V621.600H517M598.500 545.500H540.500V621.600H598.500
            M517 631.300H535V659M598.500 631.300H540.500V659
            M897 659V295H1018.700V659M955 295V365.500H897M960.700 295V365.500H1018.700
            M897 374H955V453.700H897M1018.700 374H960.700V453.700H1018.700
            M897 462.500H955V538.500H897M1018.700 462.500H960.700V538.500H1018.700
            M897 545.500H955V621.600H897M1018.700 545.500H960.700V621.600H1018.700
            M897 631.300H955V659M1018.700 631.300H960.700V659
            M610.700 289.500V449H673V370M674.400 289.500V370M680 289.500V369.600H743.500V289.500M749.400 289.500V369.600H813V289.500M818.500 289.500V369.600H882.400V289.500"/>
          <path d="M611 369.500H673" stroke="#86f2a0"/>
          <circle cx="612" cy="371" r="8" fill="none" stroke="#f00010" stroke-width="3" filter="url(#soft)"/>
          <g class="nav" transform="translate(920 155) scale(.3333)">
            <path d="M205 62L240 25 275 62ZM205 380L240 418 275 380ZM82 187V257L42 222ZM398 187V257L438 222Z"/>
            <circle cx="412" cy="50" r="20"/>
            <path d="M182 45L190 66C170 74 148 88 126 110L133 115 92 128 100 84 107 92C129 68 155 52 182 45ZM296 45L290 66C312 74 335 88 354 110L347 117 388 128 381 86 374 92C352 68 326 52 296 45Z"/>
            <path d="M170 127H312L335 150V294L312 317H170L145 294V150Z"/>
            <path d="M191 151H289L311 173V271L289 293H191L169 271V173ZM191 127V151M289 127V151M191 293V317M289 293V317M145 173H169M145 271H169M311 173H335M311 271H335"/>
            <path d="M190 325H344" stroke="#f00" stroke-width="6"/><path d="M344 172V322" stroke="#00f" stroke-width="6"/><path d="M341 325H347" stroke="#0f0" stroke-width="6"/>
            <path d="M344 346L375 333 405 346V380L375 392 344 380ZM344 346L375 358 405 346M375 358V392"/>
          </g>
          <text class="facelabel" x="1000" y="234">REAR</text>
          <path d="M1033 634H1047" stroke="#c07070" stroke-width="2"/><path d="M1047 634V621" stroke="#8080d0" stroke-width="2"/><path d="M1045 622L1047 617 1049 622Z" fill="#229"/><circle cx="1047" cy="634" r="2.500" fill="#0a8a1a"/><circle cx="1034" cy="634" r="2" fill="#8c1c1c"/>
          <text class="axis" x="1030" y="633">X</text><text class="axis" x="1047" y="616">Z</text><text class="axis" x="1047" y="633">Y</text>
        </svg>
        <div class="doctabs"><i></i><i class="sel"></i><i></i></div>
      </section>
      <div class="splitter"></div>
      <section class="report">
        <div class="title"><span>Report view</span><button aria-label="Float report"><svg class="dockicon" viewBox="0 0 11 11"><use href="#float"/></svg></button><button aria-label="Close report"><svg class="dockicon" viewBox="0 0 11 11"><rect x=".5" y=".5" width="10" height="10" rx="2"/><path d="M3 3L8 8M8 3L3 8" stroke-width="2"/></svg></button></div>
        <div class="log"><pre>10:51:31  Pick first point
10:51:31  Pick next point
10:51:41  ----------------
10:51:41  GuiCommand: Line
10:51:41  Pick first point
10:51:45  Pick next point
10:51:54  ----------------
10:51:54  GuiCommand: Move
10:51:54  Pick start point
10:51:56  Pick end point
10:52:08  ----------------
10:52:08  GuiCommand: Move
10:52:08  Pick start point
10:52:11  Pick end point
10:52:44  ----------------
10:52:44  GuiCommand: Line
10:52:44  Pick first point
10:52:48  Pick next point
10:52:49  ----------------
10:52:49  GuiCommand: Line
10:52:49  Pick first point
10:52:51  Pick next point
10:54:24  ----------------
10:54:24  GuiCommand: Rectangle
10:54:24  Pick first point
10:54:26  Pick opposite point
10:54:52  ----------------
10:54:52  GuiCommand: Rectangle
10:54:52  Pick first point
10:55:04  Pick opposite point</pre>
          <div class="scroll"><svg viewBox="0 0 13 13"><path d="M2.500 8.500L6.500 4.500 10.500 8.500Z" fill="#777"/></svg><i></i></div>
        </div>
      </section>
    </main>
  </div>
</div>
</body>
</html>
```
FILE: styles.css
```css
* { box-sizing: border-box; }
html, body { height: 100%; }
body {
  margin: 0;
  overflow: hidden;
  background: #eff0f1;
  color: #2b2f33;
  font: 12px/16px "DejaVu Sans", sans-serif;
}
button, input, select { font: inherit; color: inherit; }
button { padding: 0; border: 0; background: none; }
svg { display: block; flex: none; }
.defs { position: absolute; width: 0; height: 0; }

.window { display: flex; height: 100vh; }
.edge { display: flex; flex-direction: column; flex: 0 0 7px; padding-top: 91px; }
.edge .rule { width: 6px; border-top: 1px solid #a8aaac; }
.edge .tabend { width: 3px; height: 32px; margin: 112px 0 306px; border: 1px solid #b4b6b8; border-left: 0; border-radius: 0 4px 4px 0; }
.edge .rule:last-child { margin-top: 118px; }
.content { display: flex; flex-direction: column; flex: 1; min-width: 0; }

/* Toolbars */
.row {
  display: flex;
  align-items: center;
  gap: 5px;
  height: 39px;
  padding-left: 1px;
  border-bottom: 1px solid #b4b6b8;
  background: linear-gradient(#f9fafb, #eceef0);
}
.row.first { height: 40px; border-top: 1px solid #ced0d2; gap: 0; }
.row.first .group { margin-left: 5px; }
.row.last { height: 38px; }
.group, .tail { display: flex; align-items: center; gap: 1px; }
.group button, .tail button {
  display: flex;
  align-items: center;
  justify-content: center;
  width: 32px;
  height: 31px;
  white-space: nowrap;
}
.handle {
  flex: none;
  width: 12px;
  height: 17px;
  padding: 0 4px 0 4px;
  background:
    linear-gradient(#f4f5f6, #f4f5f6) 5px 0 / 1px 100% no-repeat content-box,
    repeating-linear-gradient(transparent 0 2px, #f4f5f6 2px 3px) content-box,
    repeating-linear-gradient(90deg, #c2c4c6 0 1px, transparent 1px 2px) content-box;
}
.group > .handle, .tail > .handle { margin-right: -1px; }
.sep { width: 6px; height: 20px; flex: none; background: linear-gradient(90deg, transparent 3px, #cfd1d3 3px 4px, transparent 4px); }
.drop { width: 11px; height: 8px; fill: #a4a6a8; }
.drop.dark { fill: #6c6e70; }
.i { width: 24px; height: 24px; }
.group button.on { border: 1px solid #a9abad; border-radius: 3px; background: #dcdddf; }
.bench { position: relative; }
.bench select {
  appearance: none;
  display: block;
  width: 172px;
  height: 24px;
  padding: 0 24px;
  border: 1px solid #a9abad;
  border-radius: 3px;
  background: linear-gradient(#fcfcfc, #f0f1f2);
}
.benchicon { position: absolute; left: 7px; top: 4px; width: 16px; height: 16px; fill: #ddd; stroke: #555; stroke-width: 3; }
.bench .drop { position: absolute; right: 6px; top: 8px; }
.group button.boxed {
  gap: 2px;
  height: 24px;
  padding-right: 2px;
  border: 1px solid #a9abad;
  border-radius: 3px;
  background: linear-gradient(#fcfcfc, #f0f1f2);
}
.group button.plane { width: 80px; }
.group button.style { width: 124px; }
.group button.brush { width: 28px; }
.group button.none { width: 80px; gap: 3px; padding-right: 3px; }
.boxed svg, .none svg { width: 16px; height: 16px; }
.tail { margin: 0 2px 0 auto; }
.tail button.more { width: 16px; font-size: 15px; }

/* Icon paints */
.l { fill: url(#gl); stroke: #8a8c8c; stroke-width: 3; }
.d { fill: url(#gd); stroke: #7c7e7e; stroke-width: 3; }
.t { fill: url(#tl); stroke: #0b5054; stroke-width: 3; }
.ls { fill: none; stroke: #999b9b; }
.o1 { fill: none; stroke: #8a8c8c; stroke-width: 8; }
.o2 { fill: none; stroke: #b4b6b6; stroke-width: 3; }
.o3 { fill: none; stroke: #e4e5e6; stroke-width: 3; }
.to { fill: none; stroke: #0b5054; stroke-width: 7; }
.ti { fill: none; stroke: #1fd0d3; stroke-width: 3; }
.to.b { stroke-width: 12; }
.ti.b { stroke-width: 7; }
.tn { fill: none; stroke: #0b5054; stroke-width: 5; }
.thin { fill: none; stroke: #0b6064; stroke-width: 4; }
.face { fill: #22d8da; stroke: #0b5054; stroke-width: 3; }
.face.deep { fill: #0f9a9e; }
.mark { fill: none; stroke: #4c4e50; stroke-width: 4; }
.pt { fill: #4c4e50; }
.tiny { font: bold 19px "DejaVu Sans", sans-serif; fill: #0b5054; }
.tiny.grey { fill: #7c7e7e; font-size: 21px; }

/* Dock panes */
.panes { display: flex; flex: 1; min-height: 0; }
.title { display: flex; align-items: center; gap: 3px; height: 20px; padding: 1px 2px 0 4px; }
.title span { flex: 1; }
.dockicon { width: 11px; height: 11px; fill: none; stroke: #5c5e60; }
.splitter {
  flex: none;
  width: 6px;
  padding: 260px 3px 228px 2px;
  background: repeating-linear-gradient(#b4b6b8 0 1px, transparent 1px 3px) content-box;
}

.combo { display: flex; flex-direction: column; flex: 0 0 504px; }
.tabs { display: flex; align-items: flex-end; height: 26px; }
.tab { width: 60px; height: 24px; padding-top: 2px; border: 1px solid #b4b6b8; border-width: 1px 0 0 1px; border-radius: 3px 0 0; background: #e6e8e9; }
.tab.current {
  display: flex;
  align-items: center;
  justify-content: center;
  gap: 4px;
  position: relative;
  width: 77px;
  height: 27px;
  margin-bottom: -1px;
  border-width: 1px 1px 0;
  border-radius: 3px 3px 0 0;
  background: #fcfcfc;
}
.tab svg { width: 16px; height: 16px; }
.frame { display: flex; flex: 1; padding: 1px 1px 0; border: 1px solid #a9abad; border-bottom: 0; background: #f4f5f6; }
.tasks {
  display: flex;
  flex-direction: column;
  align-items: center;
  flex: 1;
  gap: 17px;
  padding: 17px 8px 0;
  border: 1px solid #a9abad;
  border-bottom: 0;
  background: #777978 linear-gradient(#fff, #777978) 0 0 / 100% 145px no-repeat;
}
.push {
  display: flex;
  align-items: center;
  justify-content: center;
  gap: 2px;
  height: 24px;
  padding-right: 3px;
  border: 1px solid #a9abad;
  border-radius: 3px;
  background: linear-gradient(#fdfdfd, #eeeff0);
}
.push.close { width: 80px; gap: 4px; }
.push.close svg { width: 12px; height: 12px; }
.push .enter { width: 16px; height: 16px; }
.card { align-self: stretch; height: 323px; background: #eff0f1; border-radius: 4px 4px 0 0; }
.card h2 {
  display: flex;
  align-items: center;
  gap: 2px;
  height: 25px;
  margin: 0;
  padding: 0 3px 0 5px;
  border: 1px solid #fff;
  border-radius: 4px 4px 0 0;
  background: linear-gradient(90deg, #3daee9, #a2deff);
  color: #fff;
  font: bold 12px/16px "DejaVu Sans", sans-serif;
}
.card h2 span { flex: 1; }
.recticon { width: 16px; height: 16px; }
.fold { width: 14px; height: 14px; }
.fields { display: flex; flex-direction: column; gap: 6px; padding: 13px 14px 8px; }
.field { display: flex; align-items: center; }
.field label { flex: 0 0 58px; }
.entry { display: flex; position: relative; flex: 1; }
.entry input { flex: 1; min-width: 0; height: 27px; padding: 0 22px 0 2px; border: 1px solid #a9abad; border-radius: 3px; background: #fcfcfc; outline: 0; }
.entry.active input { border-color: #54aedd; }
.entry svg { position: absolute; right: 2px; top: 6px; width: 19px; height: 19px; }
.caret { position: absolute; left: 26px; top: 6px; width: 1px; height: 15px; background: #000; }
.checks { display: flex; flex-direction: column; gap: 11px; padding: 0 14px; }
.checks label { display: flex; align-items: center; gap: 5px; width: max-content; }
.checks input {
  appearance: none;
  width: 14px;
  height: 14px;
  margin: 0;
  border: 1px solid #b4b6b8;
  background: #fcfcfc;
}
.checks input:checked::before {
  content: "";
  display: block;
  width: 5px;
  height: 9px;
  margin: 1px 0 0 4px;
  border: solid #1b1d1f;
  border-width: 0 2px 2px 0;
  transform: rotate(35deg);
}

.viewport { display: flex; flex-direction: column; flex: 1; min-width: 0; margin-top: 1px; border-top: 1px solid #d08488; background: #fff; }
.scene { flex: 1; min-height: 0; width: 100%; }
.grid { fill: none; stroke: #cdcdcd; }
.walls { fill: none; stroke: #111; }
.nav { fill: #eceff6; stroke: #0c0c0c; stroke-width: 3; }
.facelabel { font: 14px "Liberation Sans", sans-serif; text-anchor: middle; fill: #111; }
.axis { font: bold 9px "Liberation Sans", sans-serif; fill: #000; }
.doctabs { display: flex; height: 4px; padding-top: 1px; background: #eff0f1; }
.doctabs i { flex: 0 0 149px; border: solid #b4b6b8; border-width: 0 0 0 1px; }
.doctabs i.sel { flex-basis: 144px; border-width: 1px 1px 0; background: #dcdcdc; }
.doctabs i:last-child { flex: 1; border-width: 1px 0 0; }

.report { display: flex; flex-direction: column; flex: 0 0 295px; }
.log { display: flex; flex: 1; min-height: 0; overflow: hidden; border: 1px solid #b4b6b8; border-bottom: 0; background: #fcfcfc; }
.log pre { flex: 1; margin: -14px 0 0; padding-left: 4px; color: #cfcfcf; font: 13px/17px "DejaVu Sans Mono", monospace; }
.scroll { flex: 0 0 14px; display: flex; flex-direction: column; border-left: 1px solid #b4b6b8; background: #e4e4e4; }
.scroll svg { width: 100%; height: 14px; background: #f6f7f8; border-bottom: 1px solid #b4b6b8; }
.scroll i { height: 15px; margin-top: auto; border-top: 1px solid #b4b6b8; background: #f6f7f8; }
```
